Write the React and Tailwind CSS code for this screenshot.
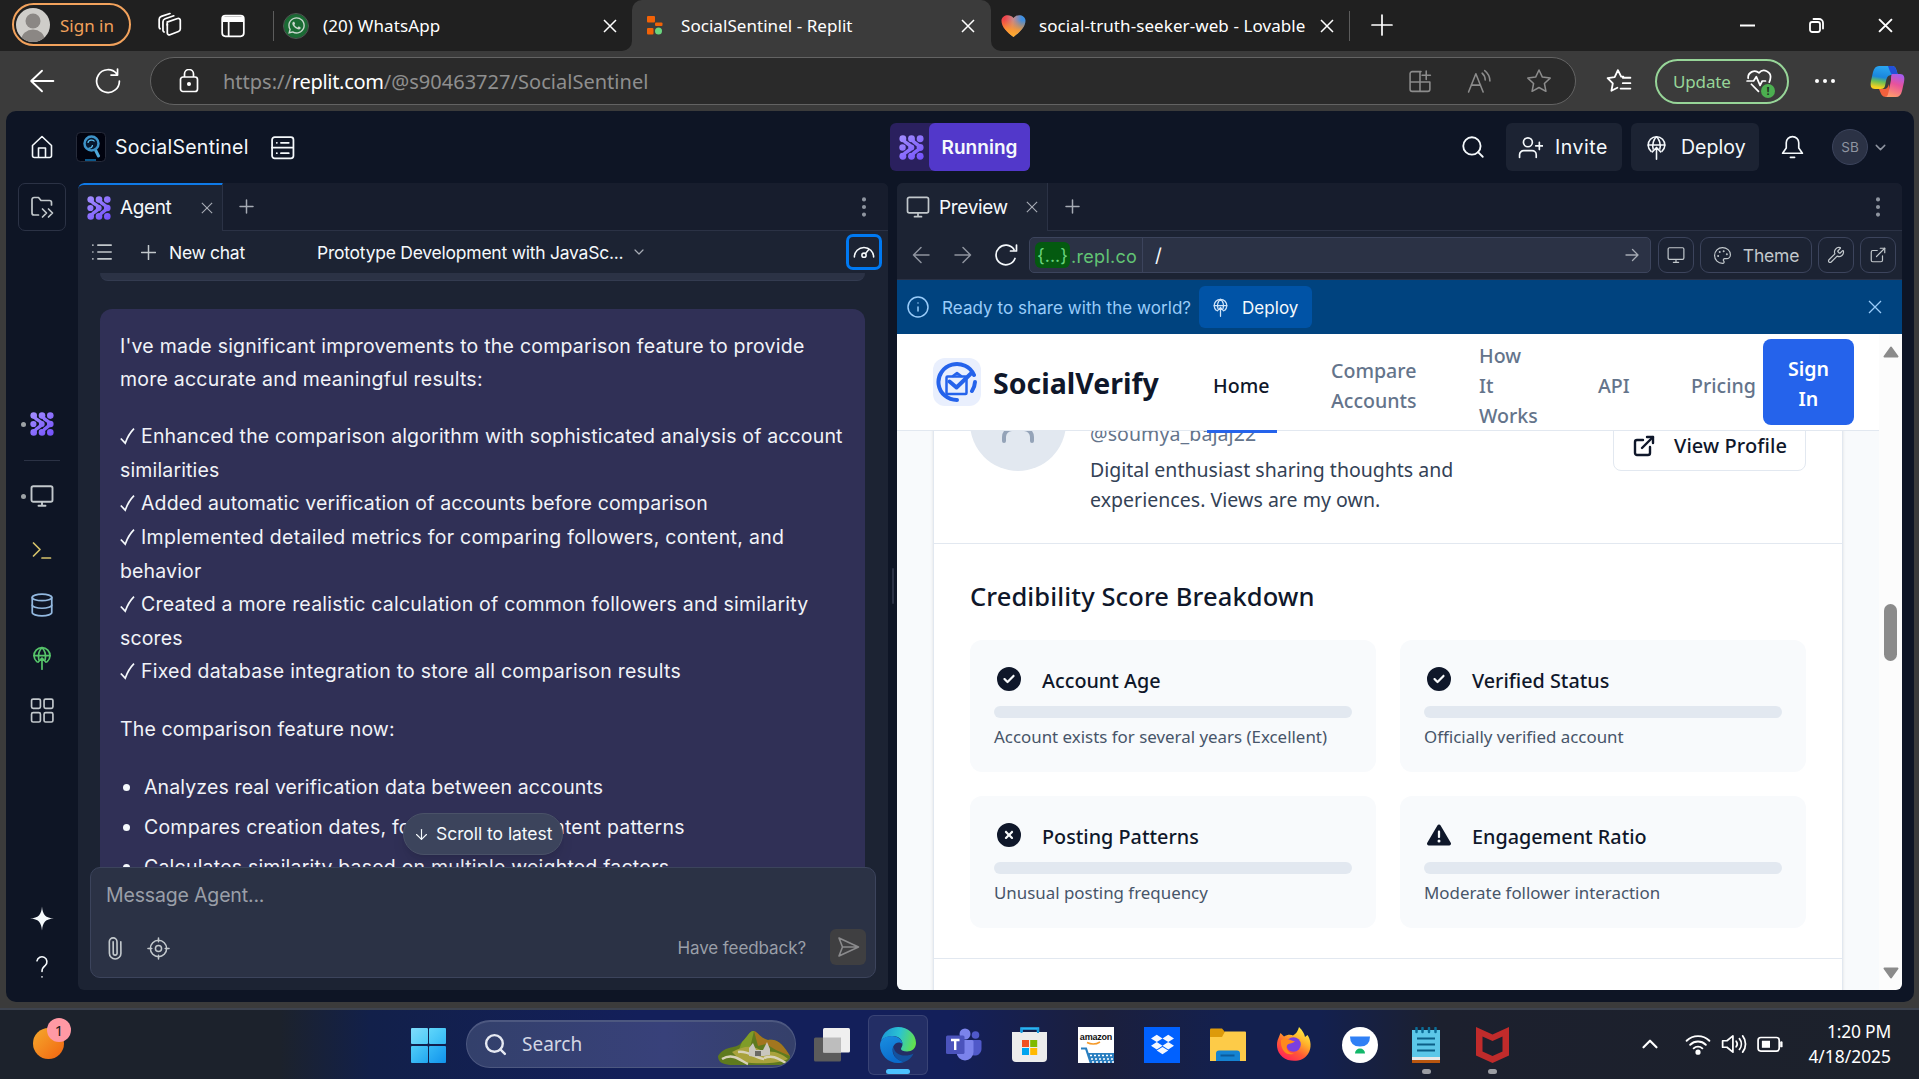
import {
  ArrowDown, ChevronDown, ChevronUp, Database, EllipsisVertical,
  ExternalLink, Info, Palette, Paperclip, Search, Wrench,
} from "lucide-react";
import { FaWhatsapp } from "react-icons/fa";
import { FaCircleCheck, FaCircleXmark, FaDropbox, FaTriangleExclamation } from "react-icons/fa6";

/* ---------- icons ---------- */

function Svg({ size = 24, box = "0 0 24 24", sw = 1.5, className = "", children }) {
  return (
    <svg width={size} height={size} viewBox={box} fill="none" stroke="currentColor" strokeWidth={sw}
      strokeLinecap="round" strokeLinejoin="round" className={"shrink-0 " + className}>
      {children}
    </svg>
  );
}

const AgentIcon = ({ size = 24 }) => (
  <svg width={size} height={size} viewBox="0 0 24 24" className="shrink-0">
    <defs>
      <linearGradient id="agentGrad" gradientUnits="userSpaceOnUse" x1="0" y1="0" x2="20" y2="24">
        <stop offset="0" stopColor="#a590ff" />
        <stop offset="1" stopColor="#7553fb" />
      </linearGradient>
    </defs>
    <g fill="url(#agentGrad)">
      <circle cx="3.7" cy="3.6" r="3.3" /><circle cx="12" cy="3.6" r="3.3" /><circle cx="20.3" cy="3.6" r="3.3" />
      <circle cx="3.4" cy="12" r="3.1" /><circle cx="11.8" cy="12" r="2.9" /><circle cx="20.3" cy="12" r="3.3" />
      <circle cx="3.7" cy="20.4" r="3.3" /><circle cx="12" cy="20.4" r="3.3" /><circle cx="20.3" cy="20.4" r="3.3" />
    </g>
    <g fill="none" stroke="url(#agentGrad)" strokeWidth="3.4">
      <path d="M4.500 4.500C6 9 10 7.500 12 12C10 16.500 6 15 4.500 19.500" />
      <path d="M13 4.500C14.500 9 18 7.500 20 12C18 16.500 14.500 15 13 19.500" />
    </g>
  </svg>
);

const DeployIcon = ({ size = 24, className = "", sw = 1.5 }) => (
  <Svg size={size} className={className} sw={sw}>
    <path d="M6.800 15.700A8 8 0 1 1 17.200 15.700" />
    <path d="M4 9.600h16M8.800 13.500C7.600 9 9.300 4 12 1.700C14.700 4 16.400 9 15.200 13.500" />
    <path d="M12 23.200V12M8 16.200L12 12l4 4.200" />
  </Svg>
);

const MonitorIcon = ({ size = 24, sw = 1.6, className = "" }) => (
  <Svg size={size} sw={sw} className={className}>
    <rect x="1.500" y="2.300" width="21" height="15.500" rx="1.800" /><path d="M12 18v3.500M8.500 21.700h7" />
  </Svg>
);

const Kebab = ({ className = "" }) => <EllipsisVertical size={26} strokeWidth={1.8} className={"shrink-0 text-[#8e949f] " + className} />;

const CloseX = ({ size = 20, sw = 1.8, className = "" }) => (
  <Svg size={size} box="0 0 14 14" sw={sw} className={className}><path d="M1 1l12 12M13 1L1 13" strokeLinecap="butt" /></Svg>
);

/* ---------- browser chrome ---------- */

const browserFont = "font-['Noto_Sans','Open_Sans',sans-serif]";

function TitleBar() {
  return (
    <div className={"flex h-[51px] shrink-0 bg-[#3b3b3b] text-[17px] text-white " + browserFont}>
      <div className="flex w-[632px] items-center rounded-br-[10px] bg-[#202020]">
        <div className="mb-[2px] ml-[12px] flex h-[43px] w-[119px] items-center rounded-full border-[2px] border-[#f2a25c] pl-[2px]">
          <svg width="34" height="34" viewBox="0 0 34 34" className="shrink-0">
            <clipPath id="avatarClip"><circle cx="17" cy="17" r="17" /></clipPath>
            <g clipPath="url(#avatarClip)">
              <rect width="34" height="34" fill="#cfcdc9" />
              <circle cx="17" cy="13" r="7.500" fill="#8b8784" /><ellipse cx="17" cy="31.500" rx="11.500" ry="10" fill="#8b8784" />
            </g>
          </svg>
          <span className="mt-[2px] ml-[10px] whitespace-nowrap text-[#f2a25c]">Sign in</span>
        </div>
        <Svg size={26} sw={1.6} className="mb-[1px] ml-[26px]">
          <path d="M9.300 9.300l9.700-3.300a1.800 1.800 0 0 1 2.500 1.700v8a2.500 2.500 0 0 1-1.700 2.300l-7.800 3a1.800 1.800 0 0 1-2.500-1.700v-8.500" />
          <path d="M6.500 18.500A2 2 0 0 1 5.500 17V9a3 3 0 0 1 2-2.800L15.500 3.500" />
          <path d="M2.800 15.500A2 2 0 0 1 2 14V6.800A3 3 0 0 1 4 4l8-2.600" />
          <path d="M9.500 11V12" />
        </Svg>
        <Svg size={26} sw={1.6} className="ml-[37px]">
          <rect x="2" y="2.500" width="20" height="19" rx="3" /><path d="M3 4h18v3.500H3z" fill="currentColor" /><path d="M8 8v13" />
        </Svg>
        <div className="ml-[27px] h-[30px] w-px bg-[#5c5c5c]" />
        <div className="ml-[10px] flex size-[24px] shrink-0 items-center justify-center rounded-full bg-[#1a6b34] outline outline-[#4f5a53]">
          <FaWhatsapp size={19} color="#c9d6cd" />
        </div>
        <span className="ml-[15px] w-[280px] shrink-0 tracking-[0.1px]">(20) WhatsApp</span>
        <CloseX size={14} sw={1.5} />
      </div>
      <div className="w-[359px] bg-[#202020]">
        <div className="flex h-full items-center rounded-t-[10px] bg-[#3b3b3b]">
          <svg width="16" height="19" viewBox="0 0 16 19" className="ml-[15px] shrink-0">
            <rect x="0" y="0" width="8" height="6.500" rx="1" fill="#f26207" /><rect x="8" y="6.500" width="7.500" height="3.500" rx="1" fill="#f26207" />
            <rect x="0" y="12" width="6.500" height="6.500" rx="1" fill="#f26207" /><circle cx="11.500" cy="15" r="3.500" fill="#6bd57f" />
          </svg>
          <span className="ml-[18px] w-[280px] shrink-0 tracking-[0.05px]">SocialSentinel - Replit</span>
          <CloseX size={14} sw={1.500} />
        </div>
      </div>
      <div className="flex flex-1 items-center rounded-bl-[10px] bg-[#202020]">
        <svg width="25" height="24" viewBox="0 0 24 24" className="ml-[10px] shrink-0">
          <defs>
            <linearGradient id="heartA" x1="0" y1="0" x2="1" y2="0.100"><stop offset="0.150" stopColor="#f0444a" /><stop offset="0.500" stopColor="#c98a8a" /><stop offset="0.850" stopColor="#3f8fe0" /></linearGradient>
            <linearGradient id="heartB" x1="0.500" y1="0.200" x2="0.450" y2="1"><stop offset="0" stopColor="#ff8a2a" stopOpacity="0" /><stop offset="0.600" stopColor="#ff9a2c" stopOpacity="0.900" /><stop offset="1" stopColor="#ffb02c" /></linearGradient>
          </defs>
          <path d="M12 23C6 18.500 0 13 0 6.500C0 1 8.500-1 12 4C15.500-1 24 1 24 6.500C24 13 18 18.500 12 23Z" fill="url(#heartA)" />
          <path d="M12 23C6 18.500 0 13 0 6.500C0 1 8.500-1 12 4C15.500-1 24 1 24 6.500C24 13 18 18.500 12 23Z" fill="url(#heartB)" />
        </svg>
        <span className="ml-[13px] w-[281px] shrink-0 tracking-[0.080px] whitespace-nowrap">social-truth-seeker-web - Lovable</span>
        <CloseX size={14} sw={1.500} />
        <div className="ml-[15px] h-[30px] w-px bg-[#5c5c5c]" />
        <Svg size={22} box="0 0 22 22" sw={1.700} className="mb-[1px] ml-[21px]"><path d="M11 1v20M1 11h20" /></Svg>
        <div className="mr-[26px] ml-auto flex items-center gap-[54px]">
          <Svg size={15} box="0 0 15 15" sw={2}><path d="M0 7.500h15" strokeLinecap="butt" /></Svg>
          <Svg size={15} box="0 0 15 15" sw={1.800}><rect x="1" y="4" width="10" height="10" rx="2.200" /><path d="M4.500 1h5.500a4 4 0 0 1 4 4v5.500" /></Svg>
          <CloseX size={15} sw={1.800} />
        </div>
      </div>
    </div>
  );
}

function AddressBar() {
  return (
    <div className={"flex h-[60px] shrink-0 items-center bg-[#3b3b3b] text-white " + browserFont}>
      <Svg size={26} box="0 0 24 24" sw={1.700} className="ml-[29px]"><path d="M22.500 12H2M12 2.500L2 12l10 9.500" /></Svg>
      <Svg size={26} sw={1.600} className="ml-[40px]"><path d="M22.500 12A10.500 10.500 0 1 1 20 5.300M20.800 1v5.500h-6" /></Svg>
      <div className="ml-[29px] flex h-[48px] w-[1426px] items-center rounded-full border-[1.500px] border-[#636363] bg-[#2a2a2a]">
        <svg width="20" height="24" viewBox="0 0 20 24" fill="none" stroke="#fff" strokeWidth="1.700" className="ml-[28px] shrink-0">
          <rect x="1.500" y="8" width="17" height="14.500" rx="2.500" /><path d="M5.500 8V5a4.500 4.500 0 0 1 9 0v3" /><circle cx="10" cy="15" r="1.200" fill="#fff" />
        </svg>
        <span className="ml-[24px] flex-1 pt-[1px] text-[20px] whitespace-nowrap text-[#8f8f8f]">
          https://<span className="tracking-[-0.300px] text-white">replit.com</span><span className="tracking-[0.030px]">/@s90463727/SocialSentinel</span>
        </span>
        <div className="mr-[23px] flex items-center gap-[34px] text-[#8c8c8c]">
          <Svg size={25} sw={1.500}>
            <path d="M12.500 2.500H4a2 2 0 0 0-2 2v15a2 2 0 0 0 2 2h15a2 2 0 0 0 2-2v-7H2M11.500 2.500v19M17.500 2v8M13.500 6h8" />
          </Svg>
          <Svg size={25} sw={1.500}><path d="M1.500 22L8.500 4.500L15.500 22M4 15.500h9M14.500 4a9 9 0 0 1 3 6.500M17 1.500a13 13 0 0 1 5 10" /></Svg>
          <Svg size={26} sw={1.400}><path d="M12 1.800l3.100 6.600 7.200.9-5.300 5 1.400 7.200L12 18l-6.400 3.500L7 14.300l-5.300-5 7.200-.9z" /></Svg>
        </div>
      </div>
      <Svg size={26} sw={1.700} className="ml-[30px]">
        <path d="M16 8h-2l-3-6-3 6.500-6.500.8 4.800 4.900L5 21l5.500-2.800M15.500 9h7M15.500 14h7M13.500 19h9" />
      </Svg>
      <div className="ml-[23px] flex h-[45px] w-[134px] items-center rounded-full border-[2px] border-[#97d598] pl-[16px] text-[17px] text-[#97d598]">
        <span className="mt-[1px] w-[57px] tracking-[-0.150px]">Update</span>
        <div className="relative ml-[16px] text-white">
          <Svg size={26} sw={1.600}>
            <path d="M2 9.500A6 6 0 0 1 12 4.500A6 6 0 0 1 22.500 9.500c0 1.500-.5 2.500-1 3.500M1 12h6l2.500-4 3.500 8 2-4h3M5 15l6.500 6.500" />
          </Svg>
          <div className="absolute right-[-3px] bottom-[-4px] flex size-[14px] items-center justify-center rounded-full bg-[#4caf50] text-[11px] font-bold text-[#203020]">!</div>
        </div>
      </div>
      <div className="ml-[26px] flex gap-[4px]">
        <div className="size-[4px] rounded-full bg-white" /><div className="size-[4px] rounded-full bg-white" /><div className="size-[4px] rounded-full bg-white" />
      </div>
      <svg width="35" height="32" viewBox="0 0 35 32" className="mr-[14px] ml-auto shrink-0">
        <defs>
          <linearGradient id="copA" x1="0.300" y1="0" x2="0.100" y2="1"><stop offset="0" stopColor="#2aa5f0" /><stop offset="0.450" stopColor="#1a86dd" /><stop offset="0.650" stopColor="#6bbf55" /><stop offset="0.900" stopColor="#f5d020" /></linearGradient>
          <linearGradient id="copB" x1="0.700" y1="0" x2="0.400" y2="1"><stop offset="0" stopColor="#a45cf0" /><stop offset="0.450" stopColor="#e8529c" /><stop offset="1" stopColor="#ff9a6c" /></linearGradient>
        </defs>
        <path d="M9 1h13c3 0 4 2 5 6l1 3h-6c-4 0-5 2-6 6l-1 5c-1 3-3 3-6 3H5c-4 0-5-3-4-8l2-9c1-4 3-6 6-6Z" fill="url(#copA)" />
        <path d="M18 1h4c3 0 4 2 5 6l1 3h-6c-2-3-3-6-4-9Z" fill="#2350d8" />
        <path d="M9 24h5c3 0 4-2 5-5l1 10c-1 2-2 3-4 3-4 0-5-3-7-8Z" fill="#f2603c" />
        <path d="M22 9h8c4 0 5 3 4 8l-2 9c-1 4-3 6-6 6H15c3 0 3-3 4-7l2-10c0-3 0-5 1-6Z" fill="url(#copB)" />
      </svg>
    </div>
  );
}

/* ---------- workspace ---------- */

function WorkspaceHeader() {
  return (
    <div className="flex h-[72px] shrink-0 items-center pl-[24px] text-[19.500px] text-[#f5f9fc]">
      <Svg size={24} sw={1.600}><path d="M2.500 10.500L12 1.500l9.500 9v10a2 2 0 0 1-2 2h-15a2 2 0 0 1-2-2zM8.500 22v-9h7v9" /></Svg>
      <svg width="30" height="30" viewBox="0 0 30 30" className="ml-[22px] shrink-0">
        <rect x="0.500" y="0.500" width="29" height="29" rx="4" fill="#01030f" stroke="#262b3a" />
        <path d="M19 17l3.500 7" stroke="#4fa9dc" strokeWidth="3" strokeLinecap="round" />
        <circle cx="15.500" cy="11.500" r="7" fill="#08182e" stroke="#3d93c8" strokeWidth="2.500" />
        <path d="M12 11c0-3 5-4 6.500-1.500M12.500 16c2 .5 4-1 4-3" stroke="#5cc0ee" strokeWidth="1.200" fill="none" />
        <path d="M9 28h11" stroke="#1276b5" strokeWidth="1.500" />
      </svg>
      <span className="mt-[1px] ml-[9px] w-[155px] tracking-[0.280px]">SocialSentinel</span>
      <Svg size={25} sw={1.700}><rect x="2" y="2" width="20.500" height="20.500" rx="2.500" /><path d="M2 12.200h20M6.500 7.500h.1M10.500 7.500h7.500M6.500 17.500h.1M10.500 17.500h7.500" /></Svg>
      <div className="ml-[595px] flex h-[48px] w-[140px] rounded-[6px] bg-[#2a205e]">
        <div className="flex w-[39px] items-center justify-center pl-[3px]"><AgentIcon size={25} /></div>
        <div className="flex w-[101px] items-center justify-center rounded-[6px] bg-[#5238ca] pt-[3px] text-[19px] font-semibold tracking-[0.050px]">Running</div>
      </div>
      <Search size={26} strokeWidth={1.700} className="ml-[430px] shrink-0" />
      <div className="ml-[20px] flex h-[48px] w-[116px] items-center rounded-[6px] bg-[#1c2333] pl-[12px]">
        <Svg size={25} sw={1.600}><circle cx="9.500" cy="7" r="4.300" /><path d="M1.500 21.500v-2.500a4 4 0 0 1 4-4h8a4 4 0 0 1 4 4v2.500M20.500 7v7M17 10.500h7" /></Svg>
        <span className="mt-[1px] ml-[12px] tracking-[0.550px]">Invite</span>
      </div>
      <div className="ml-[9px] flex h-[48px] w-[128px] items-center rounded-[6px] bg-[#1c2333] pl-[13px]">
        <DeployIcon size={25} />
        <span className="mt-[1px] ml-[12px] tracking-[0.050px]">Deploy</span>
      </div>
      <Svg size={25} sw={1.600} className="ml-[21px]"><path d="M12 1.500a6 6 0 0 0-6 6v5L2.500 17.500h19L18 12.500v-5a6 6 0 0 0-6-6zM10 21.500h4" /></Svg>
      <div className="ml-[27px] flex size-[36px] shrink-0 items-center justify-center rounded-full border border-[#3c445c] bg-[#2b3245] pt-[1px] text-[13.500px] text-[#8f95a1]">SB</div>
      <ChevronDown size={17} strokeWidth={2} className="ml-[4px] shrink-0 text-[#8f95a1]" />
    </div>
  );
}

function Sidebar() {
  return (
    <div className="flex w-[72px] shrink-0 flex-col items-center text-[#c2c8cc]">
      <div className="flex h-[48px] w-[48px] shrink-0 items-center justify-center rounded-[7px] border border-[#2b3245]">
        <Svg size={24} sw={1.700}><path d="M8.500 20H4a2 2 0 0 1-2-2V4.500a2 2 0 0 1 2-2h4.500l2.500 3h8.500a2 2 0 0 1 2 2V10M12.500 14l4 4-4 4M18.500 14l4 4-4 4" /></Svg>
      </div>
      <div className="mt-[181px] flex h-[24px] w-full items-center pl-[15px]">
        <div className="mr-[4px] size-[5px] rounded-full bg-[#9da2a6]" /><AgentIcon size={24} />
      </div>
      <div className="mt-[24px] h-px w-[36px] bg-[#2b3245]" />
      <div className="mt-[23px] flex h-[24px] w-full items-center pl-[15px]">
        <div className="mr-[4px] size-[5px] rounded-full bg-[#9da2a6]" /><MonitorIcon size={24} sw={1.900} />
      </div>
      <Svg size={24} sw={1.700} className="mt-[30px] text-[#d6c26b]"><path d="M3.500 5l6.500 6.500L3.500 18M12 20h8.500" /></Svg>
      <Database size={26} strokeWidth={1.600} className="mt-[30px] shrink-0 text-[#93b9e0]" />
      <DeployIcon size={24} className="mt-[28px] text-[#56c46a]" sw={1.700} />
      <Svg size={25} sw={1.600} className="mt-[28px]">
        <rect x="1.500" y="1" width="8.500" height="9" rx="1.500" /><rect x="13.500" y="1" width="8.500" height="9" rx="1.500" /><rect x="1.500" y="14" width="8.500" height="9" rx="1.500" /><rect x="13.500" y="14" width="8.500" height="9" rx="1.500" />
      </Svg>
      <svg width="24" height="25" viewBox="0 0 24 24" className="mt-auto shrink-0"><path d="M12 0C12.700 8.500 15.500 11.300 24 12C15.500 12.700 12.700 15.500 12 24C11.300 15.500 8.500 12.700 0 12C8.500 11.300 11.300 8.500 12 0Z" fill="#f5f9fc" /></svg>
      <Svg size={24} sw={1.600} className="mt-[24px] mb-[23px] text-[#f5f9fc]"><path d="M7 5.800a5 5 0 1 1 8.300 4.600C13 12.200 12 13.200 12 16.500M12 21.800v.2" /></Svg>
    </div>
  );
}

const checks = [
  { first: "Enhanced the comparison algorithm with sophisticated analysis of account", rest: "similarities", track: "tracking-[0.160px]" },
  { first: "Added automatic verification of accounts before comparison", track: "tracking-[0.130px]" },
  { first: "Implemented detailed metrics for comparing followers, content, and", rest: "behavior", track: "tracking-[0.290px]" },
  { first: "Created a more realistic calculation of common followers and similarity", rest: "scores", track: "tracking-[0.220px]" },
  { first: "Fixed database integration to store all comparison results", track: "tracking-[0.225px]" },
];

const bullets = [
  { text: "Analyzes real verification data between accounts", track: "tracking-[0.130px]" },
  { text: "Compares creation dates, followers, and content patterns", track: "tracking-[0.215px]" },
  { text: "Calculates similarity based on multiple weighted factors", track: "tracking-[0.210px]" },
];

function Line({ children }) {
  return <div className="whitespace-nowrap">{children}</div>;
}

function AgentPanel() {
  return (
    <div className="flex h-[807px] w-[810px] shrink-0 flex-col overflow-hidden rounded-[6px] bg-[#1c2333] text-[#f5f9fc]">
      <div className="flex h-[48px] shrink-0 bg-[#171d2d]">
        <div className="flex w-[145px] items-center rounded-tl-[6px] border-t-[2px] border-r border-t-[#0f7ae8] border-r-[#2b3245] bg-[#1c2333] pl-[9px] text-[19px]">
          <AgentIcon size={24} />
          <span className="ml-[9px] w-[81px] tracking-[-0.400px]">Agent</span>
          <CloseX size={12} sw={1.300} className="text-[#a6abb4]" />
        </div>
        <div className="flex flex-1 items-center border-b border-[#2b3245]">
          <Svg size={15} box="0 0 15 15" sw={1.500} className="ml-[16px] text-[#a6abb4]"><path d="M7.500 1v13M1 7.500h13" /></Svg>
          <Kebab className="mr-[11px] ml-auto" />
        </div>
      </div>
      <div className="flex h-[42px] shrink-0 items-center pl-[13px] text-[17.500px]">
        <Svg size={22} sw={1.800} className="text-[#c2c8cc]"><path d="M7.500 4.500H22M7.500 12H22M7.500 19.500H22M2 4.500h.1M2 12h.1M2 19.500h.1" /></Svg>
        <Svg size={15} box="0 0 15 15" sw={1.500} className="ml-[28px] text-[#c2c8cc]"><path d="M7.500 .5v14M.5 7.500h14" /></Svg>
        <span className="mt-[2px] ml-[13px] w-[148px] tracking-[-0.300px]">New chat</span>
        <span className="mt-[2px] w-[314px] tracking-[-0.240px] whitespace-nowrap">Prototype Development with JavaSc...</span>
        <ChevronDown size={16} strokeWidth={1.800} className="text-[#a6abb4]" />
        <div className="mr-[6px] ml-auto flex size-[36px] items-center justify-center rounded-[7px] border-[3px] border-[#0079f2]">
          <Svg size={22} sw={1.700}><path d="M1.500 17.500A10.500 10.500 0 1 1 22.500 17.500M13.800 13.500L17 9.500" /><circle cx="12" cy="15.500" r="2.300" /></Svg>
        </div>
      </div>
      <div className="relative min-h-0 flex-1 overflow-hidden">
        <div className="ml-[22px] h-[8px] w-[765px] rounded-b-[12px] border-b border-[#3c445c]/50 bg-[#2b3245]" />
        <div className="mt-[28px] ml-[22px] w-[765px] rounded-t-[12px] bg-[#303056] px-[20px] pt-[20.500px] text-[19.500px] leading-[33.600px] tracking-[0.150px] text-[#f1f3f8]">
          <div className="tracking-[0.230px]">
            <Line>I've made significant improvements to the comparison feature to provide</Line>
            <Line>more accurate and meaningful results:</Line>
          </div>
          <div className="mt-[23.500px]">
            {checks.map(({ first, rest, track }) => (
              <div key={first}>
                <div className={"flex h-[33.600px] whitespace-nowrap " + track}>
                  <svg width="15" height="33" viewBox="0 0 15 33" fill="none" stroke="#f5f9fc" strokeWidth="1.700" className="mr-[6px] shrink-0"><path d="M.8 18.500L5.200 23.200Q8.500 14.200 14 8.700" /></svg>
                  {first}
                </div>
                {rest && <Line>{rest}</Line>}
              </div>
            ))}
          </div>
          <div className="mt-[24px]">The comparison feature now:</div>
          <ul className="mt-[24px] flex flex-col gap-[6.700px]">
            {bullets.map(({ text, track }) => (
              <li key={text} className={"flex items-center whitespace-nowrap " + track}><span className="mr-[14px] ml-[3px] size-[7px] rounded-full bg-[#f5f9fc]" />{text}</li>
            ))}
          </ul>
        </div>
        <div className="absolute bottom-[12px] left-[325px] flex h-[42px] w-[160px] items-center rounded-full border border-[#4a5268] bg-[#3c445c] pl-[9px] text-[17.500px] whitespace-nowrap shadow-lg">
          <ArrowDown size={17} strokeWidth={1.600} className="mr-[6px] shrink-0" />
          <span className="tracking-[-0.050px]">Scroll to latest</span>
        </div>
      </div>
      <div className="mx-[12px] mb-[12px] flex h-[111px] shrink-0 flex-col rounded-[10px] border border-[#3c445c] bg-[#2b3245] text-[#9a9fa8]">
        <div className="mt-[12px] ml-[15px] h-[30px] text-[19.500px] leading-[30px] tracking-[-0.160px]">Message Agent...</div>
        <div className="mt-[19px] flex items-center">
          <Paperclip size={23} strokeWidth={1.700} className="mt-[3px] ml-[12px] shrink-0 -rotate-45 text-[#c2c8cc]" />
          <Svg size={23} sw={1.600} className="mt-[3px] ml-[21px] text-[#c2c8cc]"><circle cx="12" cy="12" r="8.500" /><circle cx="12" cy="12" r="3.200" /><path d="M12 1v4M12 19v4M1 12h4M19 12h4" /></Svg>
          <span className="mt-[4px] mr-[24px] ml-auto text-[17px] tracking-[-0.080px]">Have feedback?</span>
          <div className="mr-[9px] flex size-[36px] items-center justify-center rounded-[6px] bg-[#3f3f41]">
            <Svg size={24} sw={1.600} className="text-[#8a8a8c]"><path d="M3 3l19.500 9L3 21l3.500-9zM6.500 12H22" /></Svg>
          </div>
        </div>
      </div>
    </div>
  );
}

function ToolButton({ className = "", children }) {
  return <div className={"flex h-[36px] shrink-0 items-center justify-center rounded-[9px] border border-[#3c445c] text-[#c2c8cc] " + className}>{children}</div>;
}

function PreviewPanel() {
  return (
    <div className="flex h-[807px] w-[1005px] shrink-0 flex-col overflow-hidden rounded-[6px] bg-[#1c2333] text-[#f5f9fc]">
      <div className="flex h-[48px] shrink-0 bg-[#171d2d]">
        <div className="flex w-[151px] items-center border-r border-[#2b3245] bg-[#1c2333] pl-[9px] text-[19px]">
          <MonitorIcon size={24} sw={1.700} className="text-[#c2c8cc]" />
          <span className="mt-[2px] ml-[9px] w-[87px] tracking-[-0.350px]">Preview</span>
          <CloseX size={12} sw={1.300} className="text-[#a6abb4]" />
        </div>
        <div className="flex flex-1 items-center border-b border-[#2b3245]">
          <Svg size={15} box="0 0 15 15" sw={1.500} className="ml-[17px] text-[#a6abb4]"><path d="M7.500 1v13M1 7.500h13" /></Svg>
          <Kebab className="mr-[11px] ml-auto" />
        </div>
      </div>
      <div className="flex h-[49px] shrink-0 items-center border-b border-[#2b3245] text-[18px]">
        <Svg size={18} box="0 0 18 18" sw={1.500} className="ml-[15px] text-[#8e949f]"><path d="M17 9H1.500M9 1.500L1.500 9l7.500 7.500" /></Svg>
        <Svg size={18} box="0 0 18 18" sw={1.500} className="ml-[24px] text-[#8e949f]"><path d="M1 9h15.500M9 1.500L16.500 9 9 16.500" /></Svg>
        <Svg size={24} sw={1.700} className="ml-[22px]"><path d="M21 15.500A9.800 9.800 0 1 1 20 6.500M22.500 2v6h-6" /></Svg>
        <div className="ml-[11px] flex h-[36px] w-[622px] items-center rounded-[5px] border border-[#3c445c] bg-[#2b3245]">
          <div className="ml-[5px] flex h-[26px] w-[35px] items-center justify-center rounded-[6px] bg-[#045a10] text-[#6bd57f]">{"{...}"}</div>
          <span className="mt-[2px] w-[72px] pl-[1px] tracking-[0.300px] text-[#62c474]">.repl.co</span>
          <div className="h-full w-px bg-[#3c445c]" />
          <span className="mt-[2px] ml-[12px] text-[19px]">/</span>
          <Svg size={14} box="0 0 14 14" sw={1.300} className="mr-[11px] ml-auto text-[#a6abb4]"><path d="M1 7h12M7.500 1.500L13 7l-5.500 5.500" /></Svg>
        </div>
        <ToolButton className="ml-[7px] w-[36px]"><MonitorIcon size={18} /></ToolButton>
        <ToolButton className="ml-[6px] w-[112px]">
          <Palette size={19} strokeWidth={1.500} /><span className="mt-[2px] ml-[11px] text-[17.500px] tracking-[-0.200px]">Theme</span>
        </ToolButton>
        <ToolButton className="ml-[6px] w-[36px]"><Wrench size={18} strokeWidth={1.600} /></ToolButton>
        <ToolButton className="ml-[6px] w-[36px]"><ExternalLink size={18} strokeWidth={1.600} /></ToolButton>
      </div>
      <div className="flex h-[54px] shrink-0 items-center bg-[#00437f] text-[17px] text-[#99ccfa]">
        <Info size={24} strokeWidth={1.500} className="ml-[9px] shrink-0" />
        <span className="mt-[3px] ml-[12px] w-[257px] whitespace-nowrap tracking-[0.060px]">Ready to share with the world?</span>
        <div className="flex h-[42px] w-[113px] items-center rounded-[6px] bg-[#0053a6] pl-[12px] text-[#f5f9fc]">
          <DeployIcon size={19} sw={1.600} className="text-[#cfe3f8]" /><span className="mt-[3px] ml-[12px] tracking-[0.050px]">Deploy</span>
        </div>
        <CloseX size={14} sw={1.300} className="mr-[20px] ml-auto" />
      </div>
      <div className="flex min-h-0 flex-1 font-['Noto_Sans','Open_Sans',sans-serif]">
        <SitePage />
        <div className="flex w-[23px] shrink-0 flex-col items-center bg-[#fcfcfc]">
          <svg width="16" height="12" viewBox="0 0 16 12" className="mt-[12px]"><path d="M8 1.500L14.500 10.500h-13z" fill="#8b8b8b" stroke="#8b8b8b" strokeWidth="2" strokeLinejoin="round" /></svg>
          <div className="mt-[246px] h-[57px] w-[13px] rounded-full bg-[#8b8b8b]" />
          <svg width="16" height="12" viewBox="0 0 16 12" className="mt-auto mb-[11px]"><path d="M8 10.500L14.500 1.500h-13z" fill="#8b8b8b" stroke="#8b8b8b" strokeWidth="2" strokeLinejoin="round" /></svg>
        </div>
      </div>
    </div>
  );
}

const factors = [
  { title: "Account Age", note: "Account exists for several years (Excellent)", Icon: FaCircleCheck },
  { title: "Verified Status", note: "Officially verified account", Icon: FaCircleCheck },
  { title: "Posting Patterns", note: "Unusual posting frequency", Icon: FaCircleXmark },
  { title: "Engagement Ratio", note: "Moderate follower interaction", Icon: FaTriangleExclamation },
];

function SitePage() {
  return (
    <div className="flex w-[982px] shrink-0 flex-col bg-[#f8fafc] text-[#0f172a]">
      <div className="relative z-10 flex h-[97px] shrink-0 items-center border-b border-[#e2e8f0] bg-white text-[19.600px] leading-[30px] font-medium text-[#64748b]">
        <div className="mb-[1px] ml-[36px] flex size-[48px] shrink-0 items-center justify-center rounded-[12px] bg-[#e9effd]">
          <Svg size={42} box="0 0 42 42" sw={4} className="text-[#2563eb]">
            <path d="M21 39A18.500 18 0 1 1 38 14M39 21a18 18 0 0 1-3 9" />
            <rect x="10.500" y="15.500" width="20" height="17.500" rx="1" strokeWidth="2.500" />
            <path d="M13.500 20.500l7 6L36 11.500" strokeWidth="4" /><path d="M17 15l4-3 4 3" strokeWidth="2.500" />
          </Svg>
        </div>
        <span className="mt-[2px] ml-[12px] w-[220px] text-[28.500px] font-bold tracking-[0px] text-[#0f172a]">SocialVerify</span>
        <div className="relative mt-[4px] flex h-[93px] w-[118px] items-center pt-[3px] text-[#0f172a]">
          Home
          <div className="absolute bottom-[-2px] left-[-6px] h-[3px] w-[70px] bg-[#2563eb]" />
        </div>
        <div className="mt-[8px] w-[148px]">Compare<br />Accounts</div>
        <div className="mt-[8px] w-[119px]">How<br />It<br />Works</div>
        <div className="mt-[8px] w-[93px]">API</div>
        <div className="mt-[8px] w-[72px]">Pricing</div>
        <div className="mb-[5px] flex h-[86px] w-[91px] shrink-0 items-center justify-center self-end rounded-[8px] bg-[#2563eb] pt-[3px] text-center font-semibold text-white">Sign<br />In</div>
      </div>
      <div className="min-h-0 flex-1 overflow-hidden px-[36px]">
        <div className="h-[680px] w-[910px] border-x border-[#e2e8f0] bg-white shadow-sm">
          <div className="-mt-[56px] flex h-[168px] items-start px-[36px]">
            <div className="flex size-[96px] shrink-0 items-center justify-center rounded-full bg-[#e2e8f0]">
              <Svg size={48} sw={2} className="text-[#94a3b8]"><path d="M19 21v-2a4 4 0 0 0-4-4H9a4 4 0 0 0-4 4v2" /><circle cx="12" cy="7" r="4" /></Svg>
            </div>
            <div className="mt-[44px] ml-[24px] text-[19.500px] leading-[30px] whitespace-nowrap text-[#334155]">
              <div className="tracking-[0.100px] text-[#64748b]">@soumya_bajaj22</div>
              <div className="mt-[6px]">Digital enthusiast sharing thoughts and</div>
              <div className="tracking-[0.040px]">experiences. Views are my own.</div>
            </div>
            <div className="mt-[46px] ml-auto flex h-[50px] w-[193px] items-center rounded-[8px] border border-[#e2e8f0] text-[20px] font-medium tracking-[0.080px]">
              <ExternalLink size={24} strokeWidth={2.400} className="mr-[18px] ml-[18px] shrink-0" />View Profile
            </div>
          </div>
          <div className="border-y border-[#e2e8f0] pr-[34px] pb-[30px] pl-[36px] pt-[33px]">
            <h2 className="h-[39px] text-[25.500px] leading-[38px] font-medium tracking-[0.110px]">Credibility Score Breakdown</h2>
            <div className="mt-[24px] grid w-[836px] grid-cols-2 gap-[24px]">
              {factors.map(({ title, note, Icon }) => (
                <div key={title} className="h-[132px] rounded-[12px] bg-[#f8fafc] px-[24px]">
                  <div className="flex h-[66px] items-center pt-[14px]">
                    <Icon size={24} className="mr-[21px] mb-[2px] ml-[3px] shrink-0" />
                    <span className="pt-[1px] text-[19.800px] font-medium whitespace-nowrap">{title}</span>
                  </div>
                  <div className="h-[12px] rounded-full bg-[#e2e8f0]" />
                  <div className="mt-[6px] text-[16.900px] leading-[26px] whitespace-nowrap text-[#475569]">{note}</div>
                </div>
              ))}
            </div>
          </div>
        </div>
      </div>
    </div>
  );
}

/* ---------- taskbar ---------- */

function App36({ className = "", children }) {
  return <div className={"flex w-[60px] shrink-0 flex-col items-center justify-center " + className}>{children}</div>;
}

function Taskbar() {
  return (
    <div className={"flex h-[71px] shrink-0 border-t-[2px] border-[#3d434f] bg-[linear-gradient(90deg,#1c222c_0px,#1c222c_280px,#12204a_370px,#131f5a_640px,#131f5a_950px,#1b1f3c_1100px,#13204f_1230px,#13204f_1320px,#1c202e_1440px,#1c212b_1919px)] text-white " + browserFont}>
      <div className="relative ml-[33px] w-[378px] shrink-0">
        <div className="mt-[18px] size-[31px] rounded-full bg-gradient-to-br from-[#f4a92c] to-[#f0620f]" />
        <div className="absolute top-[8px] left-[14px] flex size-[24px] items-center justify-center rounded-full bg-[#ff99a4] text-[15px] text-[#1b1b1b]">1</div>
      </div>
      <div className="mt-[1px] grid size-[35px] shrink-0 grid-cols-2 gap-[1.500px] self-center">
        <div className="rounded-[1px] bg-gradient-to-br from-[#7fdcfb] to-[#4bcaf7]" /><div className="rounded-[1px] bg-gradient-to-br from-[#5fd6fa] to-[#31b9f5]" />
        <div className="rounded-[1px] bg-gradient-to-br from-[#4fccf8] to-[#1fa6f0]" /><div className="rounded-[1px] bg-gradient-to-br from-[#35b9f6] to-[#0f93ec]" />
      </div>
      <div className="mb-[1px] ml-[20px] flex h-[48px] w-[330px] shrink-0 items-center self-center overflow-hidden rounded-full border border-t-[2px] border-[#4d5880] bg-[linear-gradient(90deg,#33406b,#38417a_60%,#35406a)]">
        <Search size={25} strokeWidth={2.300} className="ml-[16px] shrink-0 text-[#e6e9f2]" />
        <span className="ml-[14px] w-[196px] text-[19px] text-[#d2d6e4]">Search</span>
        <svg width="74" height="36" viewBox="0 0 74 36" className="mt-[7px] shrink-0">
          <path d="M0 26C8 14 18 20 24 12C30 6 32 0 36 1C40 2 42 8 50 10C60 8 66 16 72 26C73 32 66 35 60 35H12C4 34 0 32 0 26Z" fill="#5f7a1e" />
          <path d="M36 1C40 2 42 8 50 10C60 8 66 16 72 26L58 20L48 14L40 16Z" fill="#a3761f" />
          <path d="M24 12C30 6 32 0 36 1L32 18L20 22Z" fill="#7f9c28" />
          <path d="M14 22C26 16 34 14 46 22C56 20 64 24 70 29C60 34 40 34 24 32Z" fill="#a9a23c" />
          <path d="M4 29C16 22 24 32 30 34M20 22C30 20 36 28 46 29M46 28C56 24 62 30 68 33" stroke="#d8d2b8" strokeWidth="2.500" fill="none" />
          <path d="M31 26V18l4-5 3 7h7l4-8 3 7v6l-14 2z" fill="#c9c6be" /><path d="M37 21h6v5h-6z" fill="#6b6a64" />
        </svg>
      </div>
      <App36 className="ml-[6px]">
        <svg width="36" height="34" viewBox="0 0 36 34"><rect x="0" y="9.500" width="27" height="24" rx="1.500" fill="#5b5b5b" /><rect x="9" y="0" width="27" height="24.500" rx="1.500" fill="#efefef" /><path d="M9 9.500h18v15H9z" fill="#bdbdbd" /></svg>
      </App36>
      <div className="ml-[6px] flex h-[60px] w-[60px] shrink-0 flex-col items-center self-center rounded-[6px] border border-white/10 bg-white/7 pt-[11px]">
        <svg width="36" height="36" viewBox="0 0 36 36" className="shrink-0">
          <defs>
            <linearGradient id="edgeA" x1="0" y1="0.300" x2="1" y2="0.500"><stop offset="0" stopColor="#1c96d6" /><stop offset="0.500" stopColor="#2bc3d2" /><stop offset="1" stopColor="#62e04c" /></linearGradient>
            <linearGradient id="edgeB" x1="0" y1="0" x2="0.400" y2="1"><stop offset="0" stopColor="#1a8fe0" /><stop offset="1" stopColor="#0a6ccd" /></linearGradient>
          </defs>
          <path d="M1 14C3 5 10 0 18 0C28 0 36 7 36 16C36 21 32 24.500 27 24.500C23.500 24.500 21 23.500 21 22C21 20.500 22.500 20 22.500 17C22.500 13 19 9 13 9C7 9 2 12 1 14Z" fill="url(#edgeA)" />
          <path d="M0 18C0 12 6 9 12 9C18 9 22.500 13 22.500 17C20 14.500 15 15 13 20C11 27 16 33 24 35C22 35.800 20 36 18 36C8 36 0 28 0 18Z" fill="url(#edgeB)" />
          <path d="M13.500 19C11 27 17 34 24 35C29 33.500 32 30 33.500 26.500C26 30.500 14 29 13.500 19Z" fill="#13529f" />
        </svg>
        <div className="mt-[6px] h-[5px] w-[24px] shrink-0 rounded-full bg-[#4cc2ff]" />
      </div>
      <App36 className="ml-[6px]">
        <svg width="36" height="34" viewBox="0 0 36 34">
          <circle cx="29.500" cy="7" r="3.800" fill="#5059c9" /><path d="M24 12h10a1.500 1.500 0 0 1 1.500 1.500V21a6.500 6.500 0 0 1-9 6z" fill="#5059c9" />
          <circle cx="19" cy="6" r="5.500" fill="#7b83eb" /><path d="M11 12h15a1.500 1.500 0 0 1 1.500 1.500V24a8.500 8.500 0 0 1-17 0z" fill="#7b83eb" />
          <rect x="0" y="7.500" width="18.500" height="18.500" rx="1.500" fill="#4b53bc" /><path d="M5 12h8.500M9.200 12v10" stroke="#fff" strokeWidth="2.400" />
        </svg>
      </App36>
      <App36 className="ml-[6px]">
        <svg width="36" height="36" viewBox="0 0 36 36">
          <path d="M9.500 8V1.500h16.500V8" fill="none" stroke="#28b5f5" strokeWidth="2.500" /><path d="M0 5h35v26a4 4 0 0 1-4 4H4a4 4 0 0 1-4-4z" fill="#ececec" />
          <path d="M9.500 1.500V6M26 1.500V6" stroke="#1b9ce0" strokeWidth="2" />
          <path d="M10 13h7v7h-7z" fill="#f25022" /><path d="M18.200 13h7v7h-7z" fill="#7fba00" /><path d="M10 21h7v7h-7z" fill="#00a4ef" /><path d="M18.200 21h7v7h-7z" fill="#ffb900" />
        </svg>
      </App36>
      <App36 className="ml-[6px]">
        <div className="flex size-[36px] flex-col items-center overflow-hidden bg-white">
          <span className="mt-[5px] h-[9px] font-['Liberation_Sans',sans-serif] text-[9px] leading-[10px] font-bold tracking-[-0.200px] text-[#111]">amazon</span>
          <svg width="36" height="22" viewBox="0 0 36 22" className="shrink-0">
            <path d="M9 1.500c5 2.500 9 2 13-.5" stroke="#f59a2a" strokeWidth="1.500" fill="none" />
            <path d="M3 7.500h5l5 15" stroke="#2a7fc0" strokeWidth="2.200" fill="none" /><path d="M10 12h26v10H13z" fill="#2a7fc0" />
            <path d="M12 14.500h24M13 18h23M14 21h22" stroke="#fff" strokeWidth="1.500" strokeDasharray="2 2" />
          </svg>
        </div>
      </App36>
      <App36 className="ml-[6px]"><div className="flex size-[36px] items-center justify-center bg-[#0061ff]"><FaDropbox size={23} color="#f4f8ff" /></div></App36>
      <App36 className="ml-[6px]">
        <svg width="36" height="34" viewBox="0 0 36 34">
          <path d="M0 1.500Q0 .5 1 .5h11l3 3.500v6H0z" fill="#dd9a0a" /><path d="M0 9h12l3-5.500h20q1 0 1 1V33H0z" fill="#fdcb48" />
          <path d="M6 33V25.500a3 3 0 0 1 3-3h18a3 3 0 0 1 3 3V33z" fill="#1583d2" /><path d="M10.500 27.500h14" stroke="#0b5a9c" strokeWidth="2" />
        </svg>
      </App36>
      <App36 className="ml-[6px]">
        <svg width="36" height="36" viewBox="0 0 36 36">
          <defs><linearGradient id="foxA" x1="0.850" y1="0.050" x2="0.250" y2="1"><stop offset="0" stopColor="#fff34a" /><stop offset="0.350" stopColor="#ffb02a" /><stop offset="0.650" stopColor="#ff5a35" /><stop offset="1" stopColor="#ff1f5a" /></linearGradient></defs>
          <path d="M23 0C27 4 28.500 7 29 10L31.500 8C35 13 36 21 32 27C27 35 14 36 6.500 30C0 24.500 0 16 2.500 11L4.500 6L8 9.500C11 7.500 15 7.500 17 8.500C20 7 22 4 23 0Z" fill="url(#foxA)" />
          <circle cx="17.500" cy="17.500" r="7.300" fill="#7a3fe0" />
          <path d="M5 13C9 10 14 13 19 14.500C16 17 12 16 11 18.500C9 22 14 27 18 26.500C10 30 4 22 5 13Z" fill="#ff8a1c" />
        </svg>
      </App36>
      <App36 className="ml-[6px]">
        <svg width="36" height="36" viewBox="0 0 36 36"><circle cx="18" cy="18" r="18" fill="#fff" /><path d="M8 9.500h20q0 10-10 10T8 9.500z" fill="#2f80f5" /><path d="M13 26.500a5 5 0 0 1 10 0z" fill="#12b76a" /></svg>
      </App36>
      <App36 className="ml-[6px] pt-[11px]">
        <svg width="30" height="37" viewBox="0 0 30 37" className="shrink-0">
          <path d="M1 32h28v4H1z" fill="#b9560f" /><path d="M1 30h28v3H1z" fill="#e8e8e8" /><path d="M1 3h28v27H1z" fill="#5cc7e8" />
          <path d="M6 11.500h18M6 17.500h18M6 23.500h18" stroke="#0b5e86" strokeWidth="2" /><path d="M5.500 1v4M11.500 1v4M18 1v4M24.500 1v4" stroke="#0b6d98" strokeWidth="2.500" strokeLinecap="round" />
        </svg>
        <div className="mt-[5px] h-[5px] w-[9px] shrink-0 rounded-full bg-[#9b9da3]" />
      </App36>
      <App36 className="ml-[6px] pt-[11px]">
        <svg width="33" height="37" viewBox="0 0 33 37" className="shrink-0"><path d="M0 0L16.500 7.500 33 0v28.500L16.500 36 0 28.500zM6.500 9.500v15l10 4.500 10-4.500v-15l-10 4.500z" fill="#c02b2b" fillRule="evenodd" /></svg>
        <div className="mt-[5px] h-[5px] w-[9px] shrink-0 rounded-full bg-[#9b9da3]" />
      </App36>
      <div className="mr-[28px] ml-auto flex items-center pb-[2px]">
        <ChevronUp size={26} strokeWidth={2} className="mr-[22px]" />
        <Svg size={26} sw={1.800} className="mr-[10px]"><path d="M1.500 9a15 15 0 0 1 21 0M4.800 12.700a10.300 10.300 0 0 1 14.400 0M8 16a5.800 5.800 0 0 1 8 0" /><circle cx="12" cy="19.500" r="1.500" fill="currentColor" /></Svg>
        <Svg size={26} sw={1.600} className="mr-[10px]"><path d="M1.500 9v6h4l5.500 4.500v-15L5.500 9zM14 9.500a4 4 0 0 1 0 5M17 7a8 8 0 0 1 0 10M20 4.500a12 12 0 0 1 0 15" /></Svg>
        <Svg size={26} sw={1.600}><rect x="1" y="6" width="19.500" height="12.500" rx="2.500" /><path d="M4.500 9h7.500v6.500H4.500z" fill="currentColor" stroke="none" /><path d="M22.500 10.500v3.500" strokeWidth="2.200" /></Svg>
        <div className="w-[108px] text-right text-[17.400px] leading-[24.500px]">
          <div className="tracking-[-0.200px]">1:20 PM</div>
          <div>4/18/2025</div>
        </div>
      </div>
    </div>
  );
}

export default function App() {
  return (
    <div className="flex h-[1079px] w-[1919px] flex-col overflow-hidden bg-[#3b3b3b]">
      <TitleBar />
      <AddressBar />
      <div className="mr-[5px] mb-[6px] ml-[6px] flex min-h-0 flex-1 flex-col rounded-[10px] bg-[#0e1525] font-['Inter','Noto_Sans',sans-serif]">
        <WorkspaceHeader />
        <div className="flex min-h-0 flex-1">
          <Sidebar />
          <AgentPanel />
          <div className="flex w-[9px] shrink-0 items-center justify-center">
            <div className="mb-[14px] h-[36px] w-[2px] rounded-full bg-[#2b3245]" />
          </div>
          <PreviewPanel />
        </div>
      </div>
      <Taskbar />
    </div>
  );
}
